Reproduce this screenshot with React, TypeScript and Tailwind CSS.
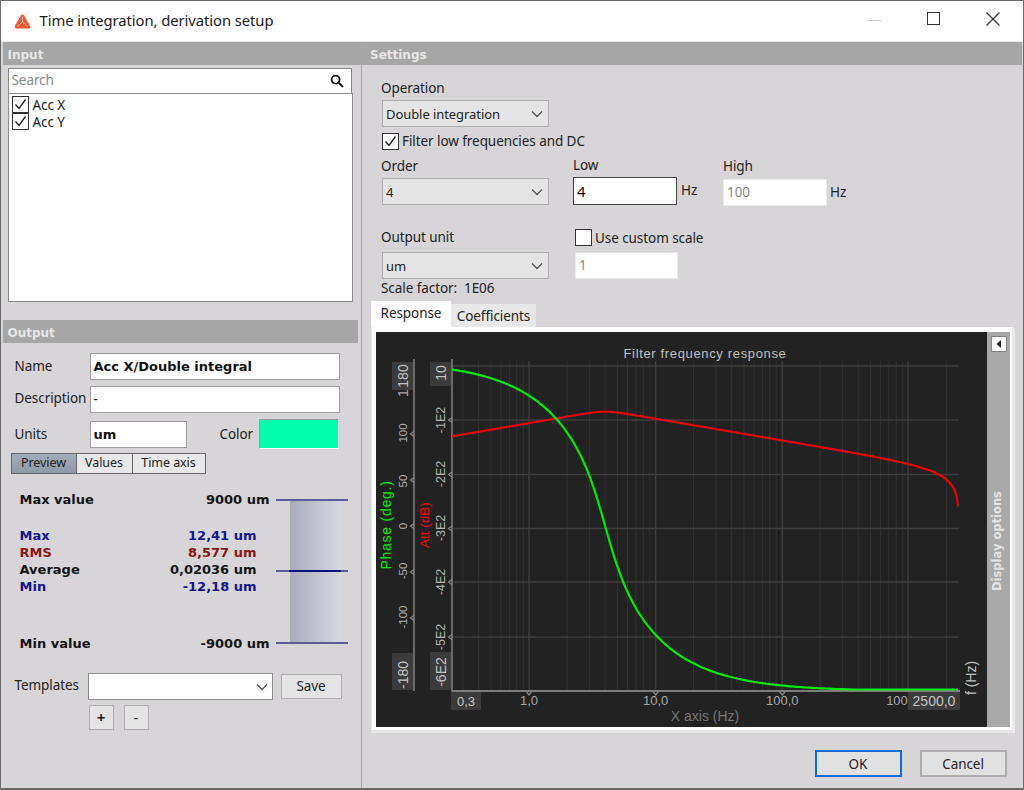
import React from "react";

const sans = "font-['Noto_Sans','Open_Sans',sans-serif]";

function Chevron() {
  return (
    <svg width="12" height="8" viewBox="0 0 12 8" className="shrink-0">
      <path d="M1 1.5 L6 6.5 L11 1.5" fill="none" stroke="#555" strokeWidth="1.3" />
    </svg>
  );
}

function Check({ checked = true }: { checked?: boolean }) {
  return (
    <span className="flex h-[17px] w-[17px] shrink-0 items-center justify-center border-[1.5px] border-[#333] bg-white">
      {checked && (
        <svg width="13" height="13" viewBox="0 0 13 13">
          <path d="M1.5 6.5 L5 10.5 L11.5 1.5" fill="none" stroke="#222" strokeWidth="1.4" />
        </svg>
      )}
    </span>
  );
}

function Select({ value }: { value: string }) {
  return (
    <div className="flex h-[27px] w-[167px] items-center justify-between border-[1.5px] border-[#adadad] bg-[#e4e4e4] pl-[3px] pr-[5px] text-[13px] text-[#222]">
      <span className="pt-[1px]">{value}</span>
      <Chevron />
    </div>
  );
}

function Field({ w, bold, children }: { w: string; bold?: boolean; children?: React.ReactNode }) {
  return (
    <div className={`flex h-[27px] ${w} items-center border-[1.5px] border-[#a0a0a0] bg-white pl-[3px] text-[#111] ${bold ? "font-['DejaVu_Sans',sans-serif] text-[13px] font-bold tracking-normal" : ""}`}>
      {children}
    </div>
  );
}

function Header({ children, className = "" }: { children: React.ReactNode; className?: string }) {
  return (
    <div className={`flex h-[23px] items-center bg-[#a6a6a6] pt-[3px] font-['DejaVu_Sans',sans-serif] text-[12px] font-bold tracking-normal text-[#e6e6e6] ${className}`}>
      {children}
    </div>
  );
}

function StatRow({ label, value, color, w = "w-[250px]", className = "" }: { label: string; value: string; color: string; w?: string; className?: string }) {
  return (
    <div className={`flex h-[17px] ${w} items-center justify-between font-['DejaVu_Sans',sans-serif] text-[13px] font-bold tracking-normal ${color} ${className}`}>
      <span>{label}</span>
      <span>{value}</span>
    </div>
  );
}

const xToF = (x: number) => Math.pow(10, (x - 529) / 126.5);

function hpParts(f: number) {
  const u = 4 / f;
  const re = 1 - u * u;
  return { u, re };
}

function pathFrom(fn: (x: number) => number, step: number) {
  let d = "";
  for (let x = 452; x <= 958.6; x += step) {
    d += `${d ? "L" : "M"}${x.toFixed(1)} ${fn(x).toFixed(1)} `;
  }
  return d;
}

// 4th-order Butterworth high-pass (4 Hz) followed by a double integrator
function phaseY(x: number) {
  const { u, re } = hpParts(xToF(x));
  const phase = ((Math.atan2(0.7654 * u, re) + Math.atan2(1.8478 * u, re)) * 180) / Math.PI - 180;
  return Math.min(525 - phase * 0.9167, 688.5);
}

function attY(x: number) {
  const f = xToF(x);
  const w = f / 4;
  const hp = -10 * Math.log10(1 + 1 / Math.pow(w, 8));
  const integ = -40 * Math.log10(f);
  const c = Math.max(Math.cos((Math.PI * f) / 5000), 0.001);
  const db = hp + integ + 40 * Math.log10(c);
  return Math.min(396 - 0.5425 * db, 505);
}

const greenPath = pathFrom(phaseY, 2);
const redPath = pathFrom(attY, 0.5);

const minorX: number[] = [];
[-1, 0, 1, 2, 3].forEach((d) => {
  [2, 3, 4, 5, 6, 7, 8, 9].forEach((n) => {
    const x = 529 + (d + Math.log10(n)) * 126.5;
    if (x > 460 && x < 960) minorX.push(x);
  });
});
const hLines = [365, 419, 473.5, 527.5, 581, 636];

function VLabel({ x, y, children, size = 12.5, fill = "#b4b4b4", spacing = 0 }: { x: number; y: number; children: string; size?: number; fill?: string; spacing?: number }) {
  return (
    <text
      x={x}
      y={y}
      transform={`rotate(-90 ${x} ${y})`}
      textAnchor="middle"
      dominantBaseline="central"
      fontSize={size}
      fill={fill}
      letterSpacing={spacing}
      fontFamily="'Liberation Sans',sans-serif"
    >
      {children}
    </text>
  );
}

function XLabel({ x, y, children, fill = "#a8a8a8", size = 13 }: { x: number; y: number; children: string; fill?: string; size?: number }) {
  return (
    <text x={x} y={y} textAnchor="middle" dominantBaseline="central" fontSize={size} fill={fill} letterSpacing="0" fontFamily="'Liberation Sans',sans-serif">
      {children}
    </text>
  );
}

function Chart() {
  return (
    <svg viewBox="376 331 611 395" width="611" height="395" className="block shrink-0">
      <rect x="376" y="331" width="611" height="395" fill="#222222" />
      {minorX.map((x) => (
        <line key={x} x1={x} x2={x} y1="360" y2="690" stroke="#323232" strokeWidth="1" />
      ))}
      {[529, 655.7, 782.3, 908].map((x) => (
        <line key={x} x1={x} x2={x} y1="360" y2="690" stroke="#3e3e3e" strokeWidth="1.4" />
      ))}
      {hLines.map((y) => (
        <line key={y} x1="452" x2="959" y1={y} y2={y} stroke="#3e3e3e" strokeWidth="1.4" />
      ))}

      <text x="705" y="352" textAnchor="middle" dominantBaseline="central" fontSize="13" fill="#c0c0c0" letterSpacing="0.65" fontFamily="'Liberation Sans',sans-serif">
        Filter frequency response
      </text>

      <line x1="414" x2="414" y1="358" y2="690" stroke="#7d7d7d" strokeWidth="1.6" />
      <line x1="452" x2="452" y1="358" y2="691" stroke="#7d7d7d" strokeWidth="1.6" />
      <line x1="452" x2="960" y1="690" y2="690" stroke="#7d7d7d" strokeWidth="2" />

      {[433, 479, 525, 571, 617].map((y) => (
        <path key={y} d={`M414 ${y - 2.5} L410.5 ${y} L414 ${y + 2.5}`} fill="none" stroke="#8a8a8a" strokeWidth="1.2" />
      ))}
      {hLines.slice(1).map((y) => (
        <path key={y} d={`M452 ${y - 2.5} L448.5 ${y} L452 ${y + 2.5}`} fill="none" stroke="#8a8a8a" strokeWidth="1.2" />
      ))}
      {[529, 655.7, 782.3].map((x) => (
        <path key={x} d={`M${x - 2.5} 691 L${x} 694 L${x + 2.5} 691`} fill="none" stroke="#8a8a8a" strokeWidth="1.2" />
      ))}

      <VLabel x={403} y={392} size={14} fill="#a8a8a8">1</VLabel>
      <rect x="392" y="361" width="21" height="28" fill="#3b3b3b" />
      <rect x="430" y="361" width="21" height="24" fill="#3b3b3b" />
      <rect x="392" y="652" width="21" height="37" fill="#3b3b3b" />
      <rect x="430" y="651" width="21" height="38" fill="#3b3b3b" />
      <rect x="451" y="691" width="30" height="18" fill="#3b3b3b" />

      <VLabel x={403} y={375} size={14} fill="#c4c4c4">180</VLabel>
      <VLabel x={441} y={372} size={14} fill="#c4c4c4">10</VLabel>
      <VLabel x={403} y={674} size={14} fill="#c4c4c4">-180</VLabel>
      <VLabel x={441} y={671} size={14} fill="#c4c4c4">-6E2</VLabel>
      {([
        ["100", 432],
        ["50", 480],
        ["0", 525],
        ["-50", 570],
        ["-100", 616],
      ] as [string, number][]).map(([t, y]) => (
        <VLabel key={t} x={402.5} y={y} size={11.5}>{t}</VLabel>
      ))}
      {([
        ["-1E2", 419],
        ["-2E2", 473],
        ["-3E2", 527],
        ["-4E2", 581],
        ["-5E2", 636],
      ] as [string, number][]).map(([t, y]) => (
        <VLabel key={t} x={441} y={y} size={12.5}>{t}</VLabel>
      ))}
      <VLabel x={386} y={524} size={14} spacing={0.75} fill="#00e800">Phase (deg.)</VLabel>
      <VLabel x={424} y={524} size={13.5} fill="#f40000">Att (dB)</VLabel>
      <VLabel x={971} y={677} size={14} fill="#c0c0c0">f (Hz)</VLabel>

      <XLabel x={466} y={700} fill="#c4c4c4">0,3</XLabel>
      <XLabel x={529} y={699.5}>1,0</XLabel>
      <XLabel x={655.7} y={699.5}>10,0</XLabel>
      <XLabel x={782.3} y={699.5}>100,0</XLabel>
      <XLabel x={897} y={699.5}>100</XLabel>
      <rect x="908" y="691" width="52" height="18" fill="#3b3b3b" />
      <XLabel x={934} y={700} size={14} fill="#c4c4c4">2500,0</XLabel>
      <XLabel x={705} y={715} fill="#757575" size={14}>X axis (Hz)</XLabel>

      <path d={redPath} fill="none" stroke="#f20000" strokeWidth="2.1" />
      <path d={greenPath} fill="none" stroke="#00ec00" strokeWidth="2.2" />
    </svg>
  );
}

export default function App() {
  return (
    <div className={`flex h-[790px] w-[1024px] flex-col overflow-hidden border-x-[1.5px] border-b-2 border-t border-[#6a6a6a] bg-[#d7d5d8] ${sans} text-[13.5px] leading-none tracking-[-0.07px] text-[#222]`}>
      {/* Title bar */}
      <div className="flex h-[40px] shrink-0 items-center bg-white">
        <svg width="17" height="15" viewBox="0 0 18 16" className="ml-[12.5px] shrink-0">
          <path d="M9 .5 C8 .5 7.4 1.2 7 2 L1 12.5 C0 14.2 1 15.5 2.5 15.5 L15.5 15.5 C17 15.5 18 14.2 17 12.5 L11 2 C10.6 1.2 10 .5 9 .5 Z" fill="#f05a30" />
          <path d="M9 3 L9 8.5 L3.5 13 M9 8.5 L14.5 13" fill="none" stroke="#fff" strokeWidth="1" opacity="0.7" />
        </svg>
        <span className="mb-[2px] ml-[9px] text-[14.8px] text-[#1a1a1a]">Time integration, derivation setup</span>
        <div className="mb-[5px] ml-auto flex items-center">
          <div className="mr-[46px] mt-[3px] h-px w-[14px] bg-[#c8c8c8]" />
          <div className="mr-[46px] h-[13px] w-[13px] border-[1.3px] border-[#333]" />
          <svg width="14" height="14" viewBox="0 0 14 14" className="mr-[23px]">
            <path d="M.5 .5 L13.5 13.5 M13.5 .5 L.5 13.5" stroke="#333" strokeWidth="1.2" />
          </svg>
        </div>
      </div>

      <div className="h-px shrink-0 bg-[#e8e8e8]" />

      <div className="flex min-h-0 flex-1">
        {/* Left */}
        <div className="flex w-[361px] shrink-0 flex-col border-r-[1.5px] border-[#a8a8a8] pb-[51px]">
          <Header className="ml-[1.5px] pl-[5px]">Input</Header>
          <div className="ml-[6.5px] mt-[3px] flex h-[25px] w-[344px] items-center justify-between border-[1.5px] border-b-0 border-[#8c8c8c] bg-white pl-[3px] pr-[7px] text-[#8a8a8a]">
            <span>Search</span>
            <svg width="14" height="14" viewBox="0 0 14 14">
              <circle cx="5.6" cy="5.6" r="4" fill="none" stroke="#111" strokeWidth="1.8" />
              <path d="M8.6 8.6 L13 13" stroke="#111" strokeWidth="2" />
            </svg>
          </div>
          <div className="ml-[6.5px] h-[209px] w-[345px] border-[1.5px] border-[#8c8c8c] bg-white pl-[3px] pt-[2px]">
            <div className="flex h-[17px] items-center gap-[4px]"><Check /><span className="pt-[2px]">Acc X</span></div>
            <div className="flex h-[17px] items-center gap-[4px]"><Check /><span className="pt-[2px]">Acc Y</span></div>
          </div>

          <Header className="ml-[1.5px] mt-[18px] h-[23px] w-[355px] pl-[5px]">Output</Header>

          <div className="ml-[13.5px] mt-[10px] flex items-center">
            <span className="w-[75px]">Name</span>
            <Field w="w-[250px]" bold>Acc X/Double integral</Field>
          </div>
          <div className="ml-[13.5px] mt-[6px] flex items-center">
            <span className="mb-[1px] w-[75px]">Description</span>
            <Field w="w-[250px]">-</Field>
          </div>
          <div className="ml-[13.5px] mt-[6px] flex items-center">
            <span className="w-[75px] pt-[2px]">Units</span>
            <Field w="w-[97px]" bold>um</Field>
            <span className="ml-[33px] w-[39px] pt-[2px]">Color</span>
            <div className="h-[30px] w-[80px] border-[1.5px] border-b-white border-l-[#9a9a9a] border-r-white border-t-[#9a9a9a] bg-[#00ffaa]" />
          </div>

          <div className="ml-[9.5px] mt-[4px] flex h-[21px] text-[12.5px]">
            <div className="flex w-[66px] items-center justify-center border-[1.5px] border-[#666] bg-gradient-to-b from-[#a3acba] to-[#8e99a9]">Preview</div>
            <div className="flex w-[56px] items-center justify-center border-[1.5px] border-l-0 border-[#666] bg-[#e8e8e8]">Values</div>
            <div className="flex w-[73px] items-center justify-center border-[1.5px] border-l-0 border-[#666] bg-[#e8e8e8]">Time axis</div>
          </div>

          {/* Preview: text + level bar */}
          <div className="relative ml-[18.5px] mt-[17px] h-[162px] w-[330px]">
            <StatRow label="Max value" value="9000 um" color="text-[#141414]" />
            <StatRow w="w-[237px]" label="Max" value="12,41 um" color="text-[#14148c]" className="mt-[19px]" />
            <StatRow w="w-[237px]" label="RMS" value="8,577 um" color="text-[#8c1414]" />
            <StatRow w="w-[237px]" label="Average" value="0,02036 um" color="text-[#141414]" />
            <StatRow w="w-[237px]" label="Min" value="-12,18 um" color="text-[#14148c]" />
            <StatRow label="Min value" value="-9000 um" color="text-[#141414]" className="mt-[40px]" />
            <div className="absolute left-[270px] top-[8px] h-[144px] w-[51px] bg-gradient-to-r from-[#a9adb9] to-[#d6d8e2]" />
            <div className="absolute left-[256px] top-[8px] h-[1.5px] w-[72px] bg-[#5c5c96]" />
            <div className="absolute left-[256px] top-[79px] h-[1.5px] w-[72px] bg-[#5c5c96]" />
            <div className="absolute left-[269px] top-[79px] h-[2px] w-[52px] bg-[#10107a]" />
            <div className="absolute left-[256px] top-[151px] h-[1.5px] w-[72px] bg-[#5c5c96]" />
          </div>

          <div className="ml-[13.5px] mt-[20px] flex items-center">
            <span className="mb-[1px] w-[73px]">Templates</span>
            <div className="flex h-[27px] w-[185px] items-center justify-end border-[1.5px] border-[#8c8c8c] bg-white pr-[4px]"><Chevron /></div>
            <div className="ml-[8px] flex h-[25px] w-[61px] items-center justify-center border-[1.5px] border-[#adadad] bg-[#e4e4e4]">Save</div>
          </div>
          <div className="ml-[87.5px] mt-[5px] flex gap-[10px] text-[15px]">
            <div className="flex h-[25px] w-[25px] items-center justify-center border-[1.5px] border-[#adadad] bg-[#e4e4e4] font-bold">+</div>
            <div className="flex h-[25px] w-[25px] items-center justify-center border-[1.5px] border-[#adadad] bg-[#e4e4e4]">-</div>
          </div>
        </div>

        {/* Right */}
        <div className="flex min-w-0 flex-1 flex-col">
          <Header className="mr-[1px] pl-[8px]">Settings</Header>

          <div className="flex-1">
            <div className="pl-[19px]">
              <div className="mt-[17px] h-[14px]">Operation</div>
              <div className="ml-[1px] mt-[4px]"><Select value="Double integration" /></div>
              <div className="ml-[1px] mt-[6px] flex h-[17px] items-center gap-[3px]"><Check /><span>Filter low frequencies and DC</span></div>

              <div className="mt-[9px] flex">
                <div className="w-[192px]">
                  <div className="h-[14px] leading-[14px]">Order</div>
                  <div className="ml-[1px] mt-[5px]"><Select value="4" /></div>
                </div>
                <div className="w-[150px]">
                  <div className="-mt-px h-[14px] leading-[14px]">Low</div>
                  <div className="mt-[5px] flex items-center">
                    <div className="flex h-[28px] w-[104px] items-center border-[1.5px] border-[#444] bg-white pl-[3px] text-[15px] text-[#111]">4</div>
                    <span className="ml-[4px]">Hz</span>
                  </div>
                </div>
                <div>
                  <div className="h-[14px] leading-[14px]">High</div>
                  <div className="mt-[6px] flex items-center">
                    <div className="flex h-[27px] w-[104px] items-center border-[1.5px] border-[#e8e8e8] bg-white pl-[3px] text-[#8a8a8a]">100</div>
                    <span className="ml-[3px]">Hz</span>
                  </div>
                </div>
              </div>

              <div className="mt-[23px] flex">
                <div className="w-[195px]">
                  <div className="h-[16px] pt-[2px]">Output unit</div>
                  <div className="ml-[1px] mt-[7px]"><Select value="um" /></div>
                  <div className="mt-[3px] h-[14px]">Scale factor:&nbsp;&nbsp;1E06</div>
                </div>
                <div className="-ml-px">
                  <div className="flex h-[17px] items-center gap-[3px]"><Check checked={false} /><span className="pt-[2px]">Use custom scale</span></div>
                  <div className="mt-[6px] flex h-[27px] w-[103px] items-center border-[1.5px] border-[#e8e8e8] bg-white pl-[3px] text-[#8a8a8a]">1</div>
                </div>
              </div>
            </div>

            {/* Tabs */}
            <div className="ml-[9px] mt-[5px] flex h-[26px] items-end">
              <div className="flex h-[26px] w-[80px] items-center justify-center bg-white">Response</div>
              <div className="flex h-[23px] w-[85px] items-center justify-center bg-[#e8e8e8] pt-[2px]">Coefficients</div>
            </div>
            <div className="ml-[9px] flex h-[406px] w-[644px] items-start border-b-[3px] border-l-[1.5px] border-r-[3px] border-[#e8e8e8] bg-white pl-[3.5px] pt-[5px]">
              <Chart />
              <div className="relative h-[395px] w-[23px] bg-[#a9a9a9]">
                <div className="absolute left-[4px] top-[4px] flex h-[16px] w-[16px] items-center justify-center border border-[#888] bg-white">
                  <svg width="6" height="8" viewBox="0 0 6 8"><path d="M5 0 L0.5 4 L5 8 Z" fill="#222" /></svg>
                </div>
                <span className="absolute left-[11.5px] top-[209px] origin-center -translate-x-1/2 -translate-y-1/2 -rotate-90 whitespace-nowrap font-['DejaVu_Sans',sans-serif] text-[11.5px] font-bold tracking-normal text-[#e4e4e4]">Display options</span>
              </div>
            </div>
          </div>
        </div>
      </div>

      {/* Footer */}
      <div className="flex h-[0px] shrink-0 justify-end">
        <div className="-mt-[38px] flex h-[27px] gap-[18px] pr-[16.5px]">
          <div className="flex w-[87px] items-center justify-center border-2 border-[#0a6fd8] bg-[#e1e1e1] pt-[2px]">OK</div>
          <div className="flex w-[87px] items-center justify-center border-2 border-[#adadad] bg-[#e1e1e1] pt-[2px]">Cancel</div>
        </div>
      </div>
    </div>
  );
}
